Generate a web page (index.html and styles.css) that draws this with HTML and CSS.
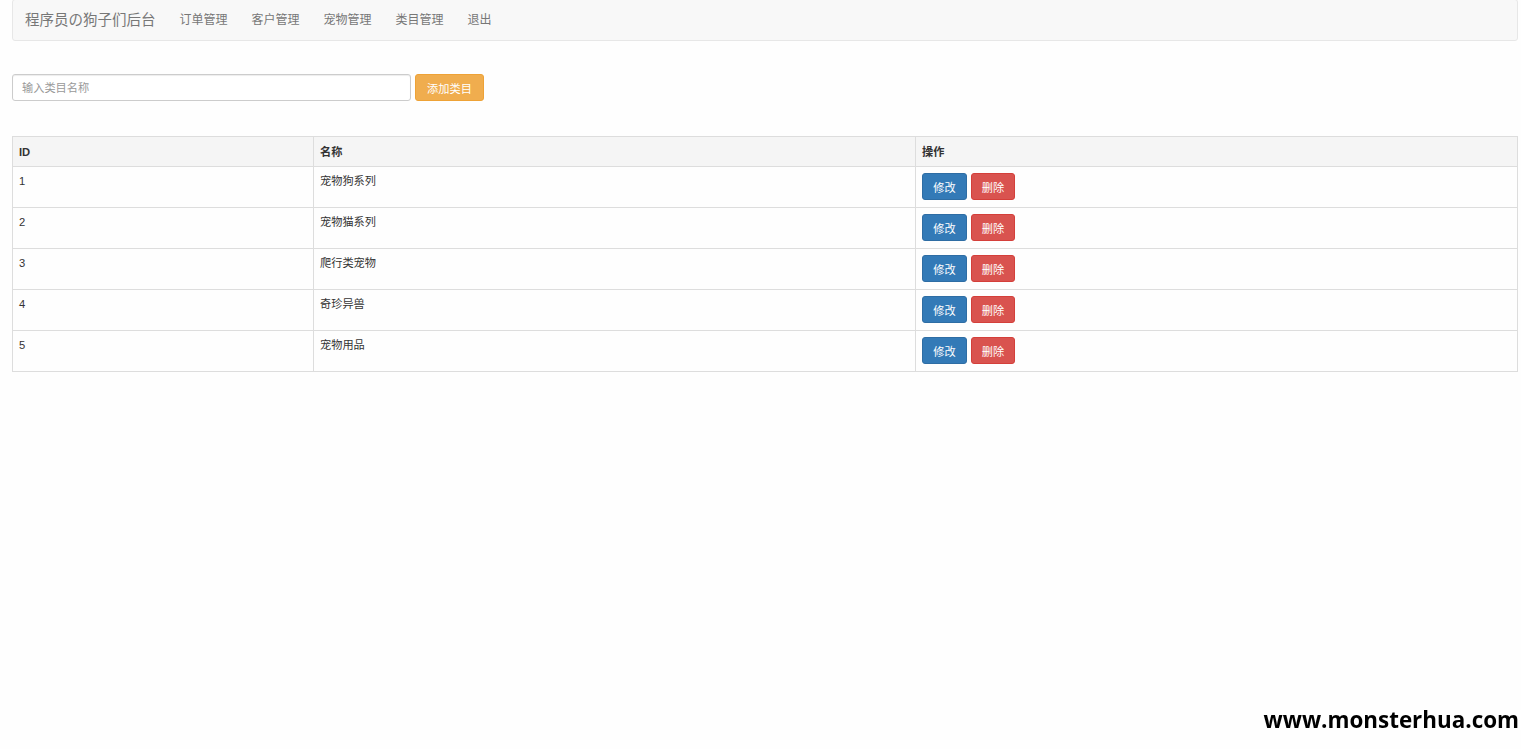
FILE: index.html
```html
<!DOCTYPE html>
<html lang="zh-CN">
<head>
    <meta charset="UTF-8">
    <title>类目管理</title>
    <link rel="stylesheet" href="styles.css">
</head>
<body>

<!-- 导航栏 -->
<nav class="navbar">
    <a class="brand" href="#">程序员の狗子们后台</a>
    <ul class="nav">
        <li><a href="#">订单管理</a></li>
        <li><a href="#">客户管理</a></li>
        <li><a href="#">宠物管理</a></li>
        <li><a href="#">类目管理</a></li>
        <li><a href="#">退出</a></li>
    </ul>
</nav>

<!-- 添加类目 -->
<form class="add-form">
    <input type="text" class="form-control" placeholder="输入类目名称">
    <button type="button" class="btn btn-warning">添加类目</button>
</form>

<!-- 类目列表 -->
<table class="table">
    <thead>
        <tr><th class="col-id">ID</th><th class="col-name">名称</th><th>操作</th></tr>
    </thead>
    <tbody>
        <tr><td>1</td><td>宠物狗系列</td><td><button class="btn btn-primary">修改</button><button class="btn btn-danger">删除</button></td></tr>
        <tr><td>2</td><td>宠物猫系列</td><td><button class="btn btn-primary">修改</button><button class="btn btn-danger">删除</button></td></tr>
        <tr><td>3</td><td>爬行类宠物</td><td><button class="btn btn-primary">修改</button><button class="btn btn-danger">删除</button></td></tr>
        <tr><td>4</td><td>奇珍异兽</td><td><button class="btn btn-primary">修改</button><button class="btn btn-danger">删除</button></td></tr>
        <tr><td>5</td><td>宠物用品</td><td><button class="btn btn-primary">修改</button><button class="btn btn-danger">删除</button></td></tr>
    </tbody>
</table>

<div class="watermark">www.monsterhua.com</div>

</body>
</html>
```

FILE: styles.css
```css
/* 基础 */
body {
    margin: 0;
    padding: 0 3px 0 12px;
    background-color: #fefefe;
    font-family: "Liberation Sans", "Noto Sans CJK SC", sans-serif;
    font-size: 11.2px;
    line-height: 16px;
    color: #333;
}

/* 导航栏 */
.navbar {
    display: flex;
    align-items: center;
    height: 42px;
    margin-top: -1px;
    background-color: #f8f8f8;
    border: 1px solid #e7e7e7;
    border-radius: 3px;
    box-sizing: border-box;
}

.navbar a {
    color: #777;
    text-decoration: none;
}

.brand {
    font-size: 14.5px;
    padding: 0 12px 0 12px;
}

.nav {
    display: flex;
    list-style: none;
    margin: 0;
    padding: 0;
}

.nav li a {
    display: block;
    padding: 0 12px;
    font-size: 12px;
}

/* 添加表单 */
.add-form {
    display: flex;
    align-items: center;
    gap: 4px;
    margin: 33px 0 35px;
}

.form-control {
    width: 399px;
    height: 27px;
    padding: 0 9px;
    border: 1px solid #ccc;
    border-radius: 3px;
    box-shadow: inset 0 1px 1px rgba(0, 0, 0, 0.075);
    box-sizing: border-box;
    font-family: inherit;
    font-size: 11.2px;
    color: #555;
}

.form-control::placeholder {
    color: #999;
}

/* 按钮 */
.btn {
    height: 27px;
    padding: 0 9px;
    border: 1px solid transparent;
    border-radius: 3px;
    font-family: inherit;
    font-size: 11.2px;
    color: #fff;
    cursor: pointer;
}

.btn-warning {
    width: 69px;
    background-color: #f0ad4e;
    border-color: #eea236;
}

.btn-primary {
    width: 45px;
    margin-right: 4px;
    background-color: #337ab7;
    border-color: #2e6da4;
}

.btn-danger {
    width: 44px;
    background-color: #d9534f;
    border-color: #d43f3a;
}

/* 表格 */
.table {
    width: 100%;
    border-collapse: collapse;
    border: 1px solid #ddd;
}

.table th,
.table td {
    padding: 6px;
    border: 1px solid #ddd;
    text-align: left;
    vertical-align: top;
}

.table th {
    height: 16px;
    padding: 7px 6px 6px;
    font-weight: bold;
    background-color: #f5f5f5;
}

.table td {
    height: 28px;
}

.col-id {
    width: 20%;
}

.col-name {
    width: 40%;
}

/* 水印 */
.watermark {
    position: fixed;
    right: 0;
    bottom: 19px;
    padding: 2px 2px 2px 4px;
    background-color: #fff;
    font-family: "Open Sans", sans-serif;
    font-weight: bold;
    font-size: 22.4px;
    color: #000;
}
```
